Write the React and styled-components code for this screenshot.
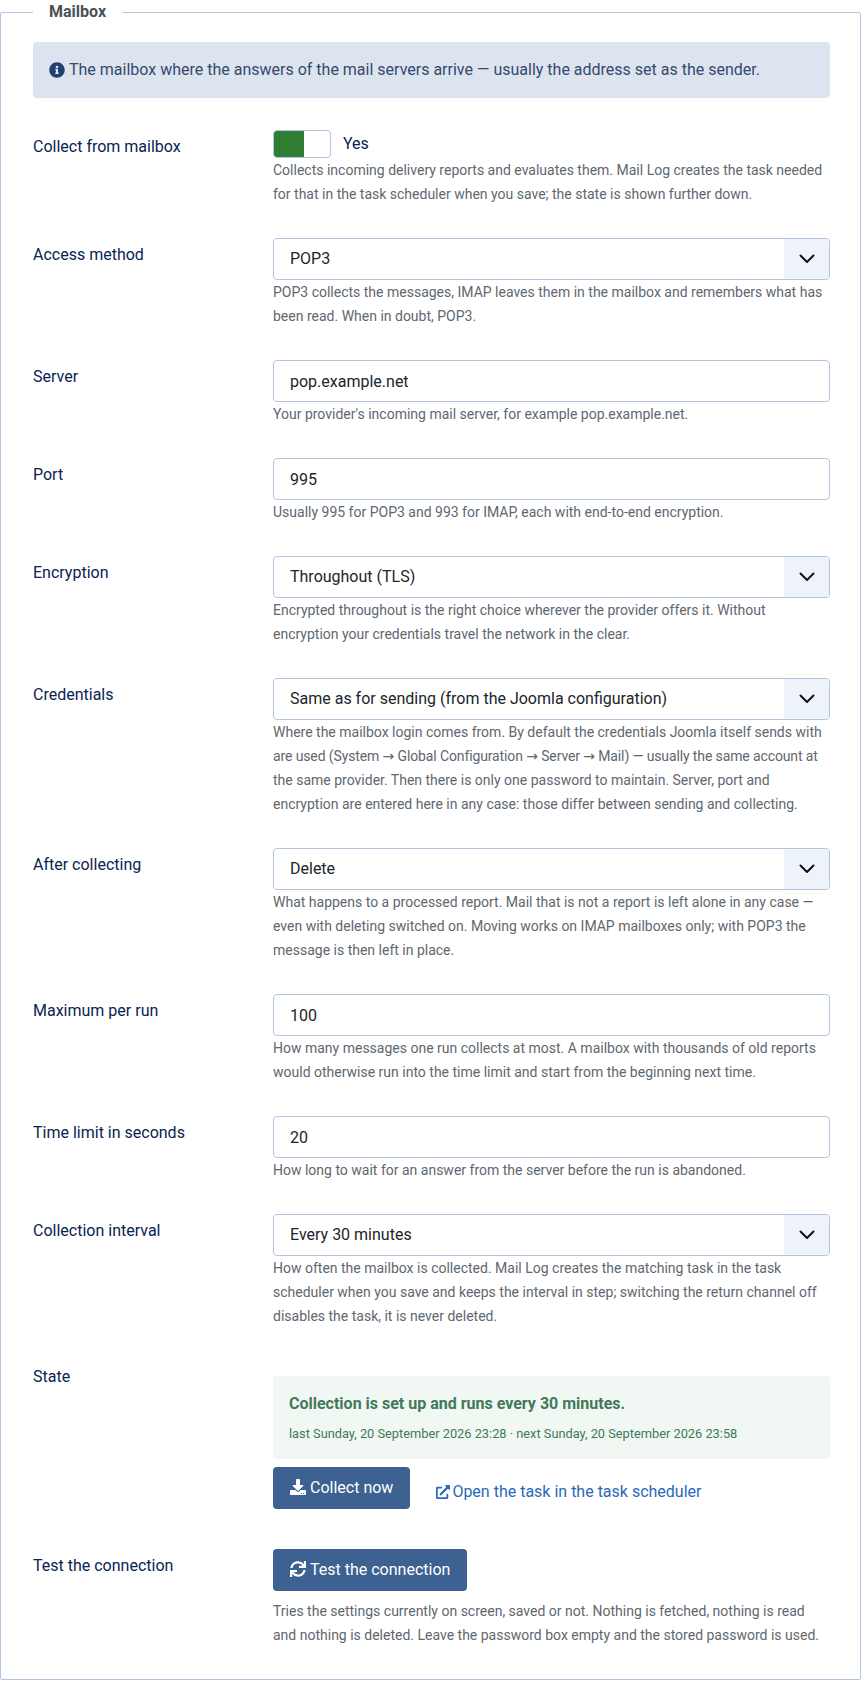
import React from "react";
import styled, { createGlobalStyle } from "styled-components";
import { FaInfoCircle, FaDownload, FaSync, FaExternalLinkAlt } from "react-icons/fa";

const GlobalStyle = createGlobalStyle`
    * {
        box-sizing: border-box;
    }

    body {
        margin: 0;
        background-color: #fff;
        font-family: Roboto, "DejaVu Sans", sans-serif;
        font-size: 16px;
        line-height: 24px;
        color: #212529;
    }
`;

const Fieldset = styled.fieldset`
    width: 861px;
    margin: 0;
    padding: 18px 30px 32px 32px;
    border: 1px solid #b2c4de;
    border-radius: 2px;
    min-width: 0;
`;

const Legend = styled.legend`
    margin-left: 0;
    padding: 0 16px;
    font-size: 16px;
    font-weight: 700;
    line-height: 24px;
    color: #495057;
`;

const Alert = styled.div`
    display: flex;
    align-items: center;
    gap: 4px;
    height: 56px;
    margin-bottom: 32px;
    padding: 16px;
    border-radius: 4px;
    background-color: #dde4f0;
    color: #34496e;
`;

const InfoIcon = styled(FaInfoCircle)`
    width: 16px;
    height: 16px;
    flex: none;
    color: #24406e;
`;

const Row = styled.div`
    display: grid;
    grid-template-columns: 240px 1fr;
    margin-bottom: 32px;

    &:last-child {
        margin-bottom: 0;
    }
`;

const Label = styled.div`
    padding-top: 5px;
    color: #0a2352;
`;

const Control = styled.div`
    min-width: 0;
`;

const Help = styled.div`
    font-size: 14px;
    line-height: 24px;
    color: #60676f;
    margin-top: ${(props) => props.$top || 0}px;
`;

const HelpLine = styled.div`
    white-space: nowrap;
    letter-spacing: ${(props) => props.$tight || 0}px;
`;

const SwitchRow = styled.div`
    display: flex;
    align-items: center;
    gap: 12px;
    height: 28px;
    color: #0a2352;
`;

const Switch = styled.div`
    display: flex;
    width: 58px;
    height: 28px;
    overflow: hidden;
    border: 1px solid #b2c4de;
    border-radius: 4px;
    background-color: #fff;
`;

const SwitchOn = styled.span`
    width: 30px;
    background-color: #2e7d32;
`;

const TextInput = styled.input`
    display: block;
    width: 100%;
    height: 42px;
    padding: 0 16px;
    border: 1px solid #b2c4de;
    border-radius: 4px;
    background-color: #fff;
    font-family: inherit;
    font-size: 16px;
    color: #212529;
    outline: none;
`;

const Select = styled.div`
    display: flex;
    align-items: stretch;
    height: 42px;
    overflow: hidden;
    border: 1px solid #b2c4de;
    border-radius: 4px;
    background-color: #fff;
`;

const SelectValue = styled.div`
    flex: 1;
    display: flex;
    align-items: center;
    padding: 0 16px;
`;

const SelectArrow = styled.div`
    display: flex;
    align-items: center;
    justify-content: center;
    width: 45px;
    background-color: #eef3fa;
    color: #111;
`;

const StateBox = styled.div`
    margin-top: 16px;
    margin-bottom: 8px;
    padding: 16px;
    border-radius: 4px;
    background-color: #f1f7f3;
    color: #42795a;
`;

const StateTitle = styled.div`
    margin-bottom: 8px;
    font-weight: 700;
`;

const StateMeta = styled.div`
    font-size: 12.8px;
    line-height: 19.2px;
`;

const Actions = styled.div`
    display: flex;
    align-items: flex-start;
    gap: 26px;
    margin-bottom: 8px;
`;

const Button = styled.button`
    display: inline-flex;
    align-items: center;
    gap: 4px;
    height: 42px;
    padding: 0 17px 2px;
    border: 0;
    border-radius: 4px;
    background-color: #3d6190;
    font-family: inherit;
    font-size: 16px;
    color: #fff;
`;

const TaskLink = styled.a`
    display: inline-flex;
    align-items: center;
    gap: 2px;
    padding-top: 13px;
    color: #2a69b8;
    text-decoration: none;
`;

function Chevron() {
    return (
        <svg width="16" height="16" viewBox="0 0 16 16" fill="none">
            <path d="M1.5 4.5L8 11l6.500-6.500" stroke="currentColor" strokeWidth="2" strokeLinecap="round" strokeLinejoin="round" />
        </svg>
    );
}

function SelectField({ value }) {
    return (
        <Select>
            <SelectValue>{value}</SelectValue>
            <SelectArrow>
                <Chevron />
            </SelectArrow>
        </Select>
    );
}

export default function App() {
    return (
        <>
            <GlobalStyle />
            <Fieldset>
                <Legend>Mailbox</Legend>
                <Alert>
                    <InfoIcon />
                    <span>The mailbox where the answers of the mail servers arrive — usually the address set as the sender.</span>
                </Alert>

                <Row>
                    <Label>Collect from mailbox</Label>
                    <Control>
                        <SwitchRow>
                            <Switch>
                                <SwitchOn />
                            </Switch>
                            <span>Yes</span>
                        </SwitchRow>
                        <Help>Collects incoming delivery reports and evaluates them. Mail Log creates the task needed for that in the task scheduler when you save; the state is shown further down.</Help>
                    </Control>
                </Row>

                <Row>
                    <Label>Access method</Label>
                    <Control>
                        <SelectField value="POP3" />
                        <Help>POP3 collects the messages, IMAP leaves them in the mailbox and remembers what has been read. When in doubt, POP3.</Help>
                    </Control>
                </Row>

                <Row>
                    <Label>Server</Label>
                    <Control>
                        <TextInput defaultValue="pop.example.net" />
                        <Help>Your provider's incoming mail server, for example pop.example.net.</Help>
                    </Control>
                </Row>

                <Row>
                    <Label>Port</Label>
                    <Control>
                        <TextInput defaultValue="995" />
                        <Help>Usually 995 for POP3 and 993 for IMAP, each with end-to-end encryption.</Help>
                    </Control>
                </Row>

                <Row>
                    <Label>Encryption</Label>
                    <Control>
                        <SelectField value="Throughout (TLS)" />
                        <Help>Encrypted throughout is the right choice wherever the provider offers it. Without encryption your credentials travel the network in the clear.</Help>
                    </Control>
                </Row>

                <Row>
                    <Label>Credentials</Label>
                    <Control>
                        <SelectField value="Same as for sending (from the Joomla configuration)" />
                        <Help>
                            <HelpLine>Where the mailbox login comes from. By default the credentials Joomla itself sends with</HelpLine>
                            <HelpLine $tight={-0.12}>are used (System → Global Configuration → Server → Mail) — usually the same account at</HelpLine>
                            <HelpLine>the same provider. Then there is only one password to maintain. Server, port and</HelpLine>
                            <HelpLine>encryption are entered here in any case: those differ between sending and collecting.</HelpLine>
                        </Help>
                    </Control>
                </Row>

                <Row>
                    <Label>After collecting</Label>
                    <Control>
                        <SelectField value="Delete" />
                        <Help>What happens to a processed report. Mail that is not a report is left alone in any case — even with deleting switched on. Moving works on IMAP mailboxes only; with POP3 the message is then left in place.</Help>
                    </Control>
                </Row>

                <Row>
                    <Label>Maximum per run</Label>
                    <Control>
                        <TextInput defaultValue="100" />
                        <Help>How many messages one run collects at most. A mailbox with thousands of old reports would otherwise run into the time limit and start from the beginning next time.</Help>
                    </Control>
                </Row>

                <Row>
                    <Label>Time limit in seconds</Label>
                    <Control>
                        <TextInput defaultValue="20" />
                        <Help>How long to wait for an answer from the server before the run is abandoned.</Help>
                    </Control>
                </Row>

                <Row>
                    <Label>Collection interval</Label>
                    <Control>
                        <SelectField value="Every 30 minutes" />
                        <Help>How often the mailbox is collected. Mail Log creates the matching task in the task scheduler when you save and keeps the interval in step; switching the return channel off disables the task, it is never deleted.</Help>
                    </Control>
                </Row>

                <Row>
                    <Label>State</Label>
                    <Control>
                        <StateBox>
                            <StateTitle>Collection is set up and runs every 30 minutes.</StateTitle>
                            <StateMeta>last Sunday, 20 September 2026 23:28 · next Sunday, 20 September 2026 23:58</StateMeta>
                        </StateBox>
                        <Actions>
                            <Button>
                                <FaDownload size={16} />
                                Collect now
                            </Button>
                            <TaskLink href="#">
                                <FaExternalLinkAlt size={14} />
                                Open the task in the task scheduler
                            </TaskLink>
                        </Actions>
                    </Control>
                </Row>

                <Row>
                    <Label>Test the connection</Label>
                    <Control>
                        <Button>
                            <FaSync size={16} />
                            Test the connection
                        </Button>
                        <Help $top={8}>Tries the settings currently on screen, saved or not. Nothing is fetched, nothing is read and nothing is deleted. Leave the password box empty and the stored password is used.</Help>
                    </Control>
                </Row>
            </Fieldset>
        </>
    );
}
